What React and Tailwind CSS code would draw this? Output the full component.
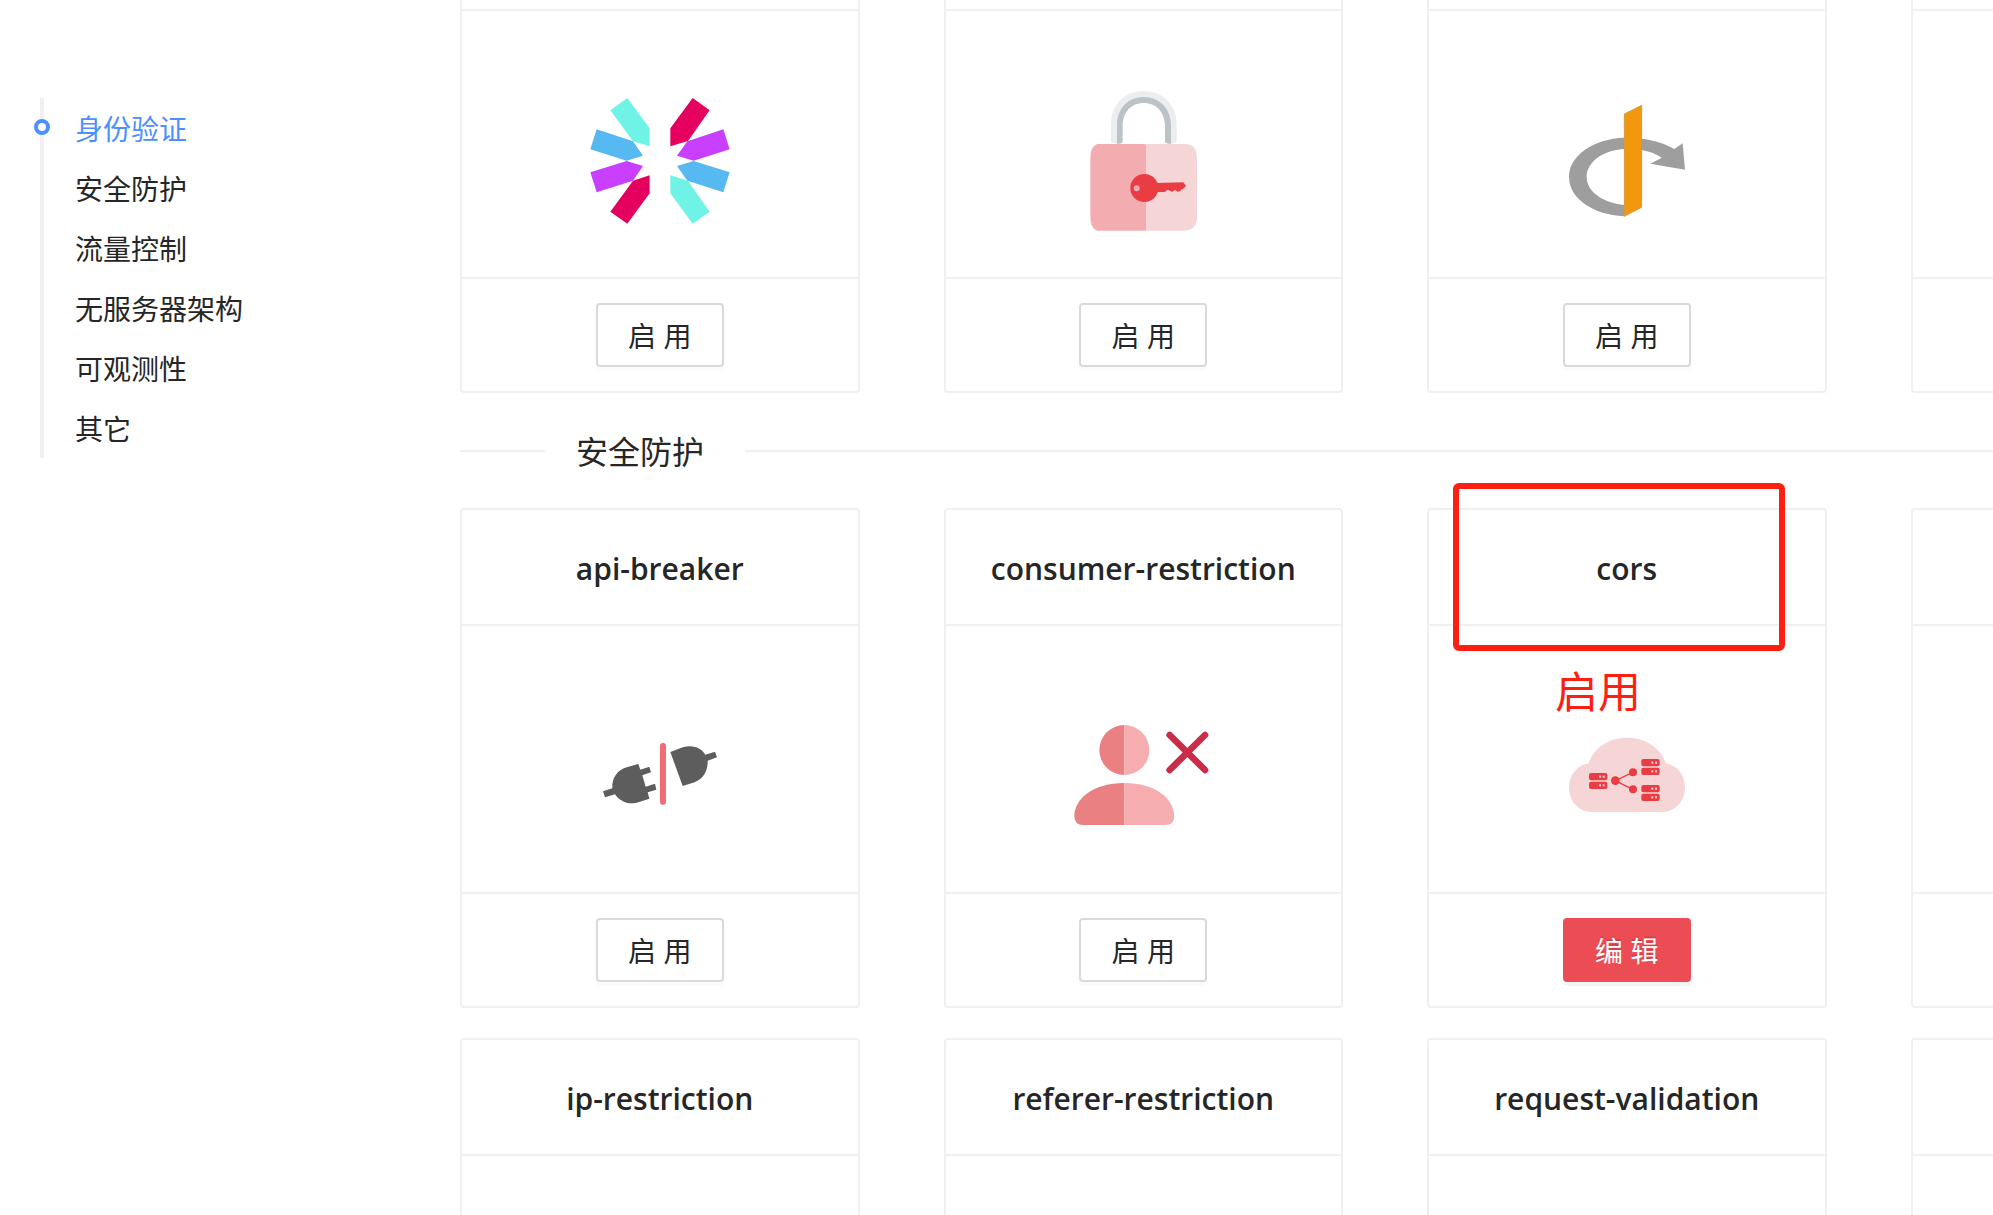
import React from "react";

const sections = ["身份验证", "安全防护", "流量控制", "无服务器架构", "可观测性", "其它"];

function JwtIcon() {
  return (
    <g transform="translate(0 108)">
      <path fill="#6ff3e6" d="M202 54L269 145V199L219 184L151 91Z M331 286L384 302L449 395L398 431L331 340Z" />
      <path fill="#56b9f2" d="M110 148L219 184L249 227L200 242L91 208Z M401 243L509 277L490 337L382 302L351 258Z" />
      <path fill="#c83fff" d="M91 277L200 243L249 258L219 302L110 337Z M490 148L509 208L401 242L351 227L382 184Z" />
      <path fill="#e5005f" d="M151 395L219 302L269 286V340L202 431Z M398 54L449 91L384 183L331 199V145Z" />
    </g>
  );
}

function LockIcon() {
  return (
    <g transform="translate(51 108)">
      <path fill="#ebedee" d="M153 184V128C155 72 196 33 251 33S348 72 350 128V184Q348 191 332 191H325V128C323 88 290 60 251 60S181 88 179 128V191H170Q155 191 153 184Z" />
      <path fill="#bcc3c7" d="M171 191V135C172 85 204 51 251 51S332 85 333 135V191Q318 192 315 185V137C314 95 288 69 251 69S189 95 188 137V185Q186 192 171 191Z" />
      <path fill="#f6d5d7" d="M250 192H371Q411 192 411 232V412Q411 452 371 452H250Z" />
      <path fill="#f3adb1" d="M112 192H252Q258 192 258 200V445Q258 452 252 452H112Q91 446 91 408V236Q91 198 112 192Z" />
      <circle cx="253" cy="324" r="42" fill="#ea3c43" />
      <path fill="#ea3c43" d="M288 309L370 307L378 318L368 328H364L360 334L352 335L347 331H343L338 335L331 334L326 330H321L315 336H288Z" />
      <circle cx="230" cy="325" r="9" fill="#f3adb1" />
    </g>
  );
}

function OpenIdIcon() {
  return (
    <g transform="translate(39 138)">
      <path fill="#9e9e9e" d="M253 143C160 146 87 197 87 261C87 323 155 374 253 379V345C188 338 140 305 140 261C140 216 188 181 253 177Z" />
      <path fill="#9e9e9e" d="M304 146C342 150 376 161 403 177L428 160L435 239L331 221L365 203C348 191 327 184 304 180Z" />
      <path fill="#f1980f" stroke="#c8872a" strokeWidth="2" d="M253 72L305 46V352L253 379Z" />
    </g>
  );
}

function PlugIcon() {
  return (
    <g transform="translate(60 183)">
      <path fill="#5d5d5d" d="M175 132L181 149L208 140L213 157L187 166L197 200L225 191L229 209L203 217L208 236L170 248C144 255 119 244 105 223L75 232L69 214L97 205C95 174 112 150 140 142Z" />
      <path fill="#5d5d5d" d="M271 96L308 82C340 72 364 84 376 104L405 95L411 112L383 122C384 153 370 176 344 187L308 198Z" />
      <rect x="240" y="69" width="18" height="185" rx="8" fill="#f16c74" />
    </g>
  );
}

function UserBlockedIcon() {
  return (
    <g transform="translate(22 123)">
      <path fill="#ea8082" d="M222 75A75 75 0 0 0 222 225Z M222 249C130 249 72 295 72 350Q74 375 98 375H222Z" />
      <path fill="#f5adb0" d="M222 75A75 75 0 0 1 222 225Z M222 249C314 249 372 295 372 350Q370 375 346 375H222Z" />
      <path stroke="#cb2c48" strokeWidth="20" strokeLinecap="round" d="M358 105L464 210M464 105L358 210" />
    </g>
  );
}

const servers = [
  [147, 369],
  [147, 395],
  [304, 327],
  [304, 353],
  [304, 405],
  [304, 431],
];

function CloudServersIcon() {
  return (
    <g transform="translate(39 -27)">
      <path fill="#f6d5d7" d="M146 340C161 293 206 263 261 263S362 293 378 340C412 347 435 375 435 412C435 456 405 486 364 486H158C116 486 87 456 87 412C87 375 112 346 146 340Z" />
      <path stroke="#ea3c43" strokeWidth="4" fill="none" d="M278 367L226 392L278 418" />
      <g fill="#ea3c43">
        <circle cx="226" cy="392" r="13" />
        <circle cx="279" cy="367" r="12" />
        <circle cx="279" cy="418" r="12" />
      </g>
      {servers.map(([x, y]) => (
        <g key={x + "-" + y}>
          <rect x={x} y={y} width="55" height="22" rx="6" fill="#ea3c43" />
          <rect x={x + 30} y={y + 8} width="6" height="6" fill="#f6d5d7" />
          <rect x={x + 41} y={y + 8} width="6" height="6" fill="#f6d5d7" />
        </g>
      ))}
    </g>
  );
}

const authPlugins = [
  { id: "jwt", Icon: JwtIcon, action: "enable" },
  { id: "key", Icon: LockIcon, action: "enable" },
  { id: "openid", Icon: OpenIdIcon, action: "enable" },
  { id: "auth-more" },
];

const securityPlugins = [
  { id: "api-breaker", title: "api-breaker", Icon: PlugIcon, action: "enable" },
  { id: "consumer-restriction", title: "consumer-restriction", Icon: UserBlockedIcon, action: "enable" },
  { id: "cors", title: "cors", Icon: CloudServersIcon, action: "edit", marked: true },
  { id: "security-more-1" },
  { id: "ip-restriction", title: "ip-restriction" },
  { id: "referer-restriction", title: "referer-restriction" },
  { id: "request-validation", title: "request-validation" },
  { id: "security-more-2" },
];

function ActionButton({ action }) {
  if (action === "edit") {
    return (
      <button
        type="button"
        className="h-16 min-w-32 rounded-sm bg-[#ec4d55] px-7 pt-0.5 text-[28px] leading-10 text-white shadow-[0_4px_0_rgba(0,0,0,0.045)] [text-shadow:0_-2px_0_rgba(0,0,0,0.12)]"
      >
        编 辑
      </button>
    );
  }
  return (
    <button
      type="button"
      className="h-16 min-w-32 rounded-sm border-2 border-[#d9d9d9] bg-white px-7 pt-0.5 text-[28px] leading-10 shadow-[0_4px_0_rgba(0,0,0,0.015)]"
    >
      启 用
    </button>
  );
}

function PluginCard({ title, Icon, action, marked }) {
  return (
    <article className="relative rounded-sm border-2 border-[#f0f0f0] bg-white">
      <header className="flex h-[116px] items-center justify-center border-b-2 border-[#f0f0f0] pt-1">
        {title && <h3 className="text-[30px] leading-12 font-semibold">{title}</h3>}
      </header>
      <div className="flex h-[266px] items-center justify-center">
        {Icon && (
          <svg viewBox="0 0 600 600" className="size-[200px]" fill="none" aria-hidden="true">
            <Icon />
          </svg>
        )}
      </div>
      <footer className="flex h-[114px] items-center justify-center border-t-2 border-[#f0f0f0]">
        {action && <ActionButton action={action} />}
      </footer>
      {marked && (
        <>
          <div className="absolute -top-[27px] left-6 h-[168px] w-[332px] rounded-md border-6 border-[#ff1e12]" />
          <p className="absolute top-[152px] left-[126px] text-[43px] leading-[60px] text-[#ff1e12]">启用</p>
        </>
      )}
    </article>
  );
}

function CardGrid({ plugins }) {
  return (
    <div className="-mr-[317px] grid grid-cols-4 gap-x-[84px] gap-y-[30px]">
      {plugins.map((plugin) => (
        <PluginCard key={plugin.id} {...plugin} />
      ))}
    </div>
  );
}

export default function App() {
  return (
    <div className="flex h-screen overflow-hidden bg-white font-['Open_Sans','Noto_Sans_CJK_SC',sans-serif] text-[#262626]">
      <nav className="w-[460px] shrink-0 pt-[98px] pl-10">
        <ul className="border-l-4 border-[#f0f0f0]">
          {sections.map((name, index) => (
            <li key={name} className="relative flex h-[60px] items-center pt-0.5 pl-[31px]">
              {index === 0 && (
                <span className="absolute top-[21px] -left-[10px] size-4 rounded-full border-4 border-[#4c90ff] bg-white" />
              )}
              <a
                href={"#" + name}
                className={index === 0 ? "text-[28px] leading-10 text-[#4c90ff]" : "text-[28px] leading-10"}
              >
                {name}
              </a>
            </li>
          ))}
        </ul>
      </nav>
      <main className="-mt-[107px] min-w-0 flex-1">
        <CardGrid plugins={authPlugins} />
        <div className="flex h-[115px] items-center">
          <span className="h-0.5 w-[85px] bg-[#f0f0f0]" />
          <h2 className="pt-0.5 pr-[41px] pl-[31px] text-[32px] leading-12">安全防护</h2>
          <span className="h-0.5 flex-1 bg-[#f0f0f0]" />
        </div>
        <CardGrid plugins={securityPlugins} />
      </main>
    </div>
  );
}
